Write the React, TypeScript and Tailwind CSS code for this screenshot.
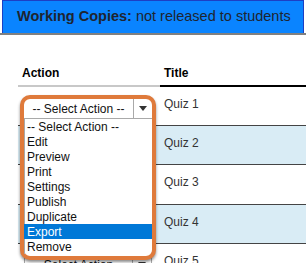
const ROWS = [
  { title: "Quiz 1", h: "h-[39px]" },
  { title: "Quiz 2", h: "h-[39px]" },
  { title: "Quiz 3", h: "h-[40px]" },
  { title: "Quiz 4", h: "h-[39px]" },
  { title: "Quiz 5", h: "h-[39px]" },
];

const ACTIONS = [
  "-- Select Action --",
  "Edit",
  "Preview",
  "Print",
  "Settings",
  "Publish",
  "Duplicate",
  "Export",
  "Remove",
];

function FakeSelect() {
  return (
    <div className="flex h-[21px] w-[128px] items-center border border-[#a9a9a9] bg-white">
      <span className="flex-1 text-center text-[12px] text-[#111]">-- Select Action --</span>
      <span className="h-full w-px bg-[#a9a9a9]" />
      <span className="flex w-[18px] justify-center">
        <span className="h-0 w-0 border-x-[4.5px] border-t-[5px] border-x-transparent border-t-[#333]" />
      </span>
    </div>
  );
}

export default function App() {
  return (
    <div className="relative h-[263px] w-[306px] overflow-hidden bg-white font-['Liberation_Sans',Arial,sans-serif]">
      {/* Section tab */}
      <div className="border-b-2 border-[#808080] pl-[2px] pr-[2px]">
        <div className="flex h-[33px] items-center border-l border-r border-t border-[#1d3fc4] bg-[#0a84ff] pl-[14px] text-[14.5px] text-[#1f2430]">
          <span className="font-bold">Working Copies:</span>
          <span className="ml-[4px]">not released to students</span>
        </div>
      </div>

      {/* Table */}
      <div className="ml-[18px] mt-[25px] w-[288px]">
        <div className="flex h-[27px] text-[12px] font-bold text-black">
          <div className="flex w-[142px] items-center border-b-2 border-[#c8c8c8] pl-[4px]">Action</div>
          <div className="flex flex-1 items-center border-b-2 border-black pl-[4px]">Title</div>
        </div>
        {ROWS.map((row, i) => (
          <div
            key={row.title}
            className={`flex ${row.h} border-b border-[#444] ${i % 2 === 1 ? "bg-[#d9ecf5]" : "bg-white"}`}
          >
            <div className="w-[142px] pl-[6px] pt-[10px]">
              <FakeSelect />
            </div>
            <div className="flex flex-1 items-center pb-[5px] pl-[4px] text-[12px] text-[#333]">{row.title}</div>
          </div>
        ))}
      </div>

      {/* Open dropdown, highlighted */}
      <div className="absolute left-[20px] top-[95px] flex h-[165px] w-[136px] flex-col rounded-[10px] border-4 border-[#df7a3b] bg-white shadow-[0_2px_3px_rgba(0,0,0,0.45)]">
        <div className="flex h-[20px] items-center border-b border-[#a9a9a9]">
          <span className="flex-1 text-center text-[12px] text-[#111]">-- Select Action --</span>
          <span className="h-[19px] w-px bg-[#a9a9a9]" />
          <span className="flex w-[18px] justify-center">
            <span className="h-0 w-0 border-x-[4.5px] border-t-[5px] border-x-transparent border-t-[#333]" />
          </span>
        </div>
        <div className="flex flex-col border-l border-[#a9a9a9]">
          {ACTIONS.map((a) => (
            <div
              key={a}
              className={`flex h-[15px] items-center pl-[2px] text-[12px] ${a === "Export" ? "-ml-px bg-[#0078d7] pl-[3px] text-white" : "text-[#111]"}`}
            >
              {a}
            </div>
          ))}
        </div>
      </div>
    </div>
  );
}
